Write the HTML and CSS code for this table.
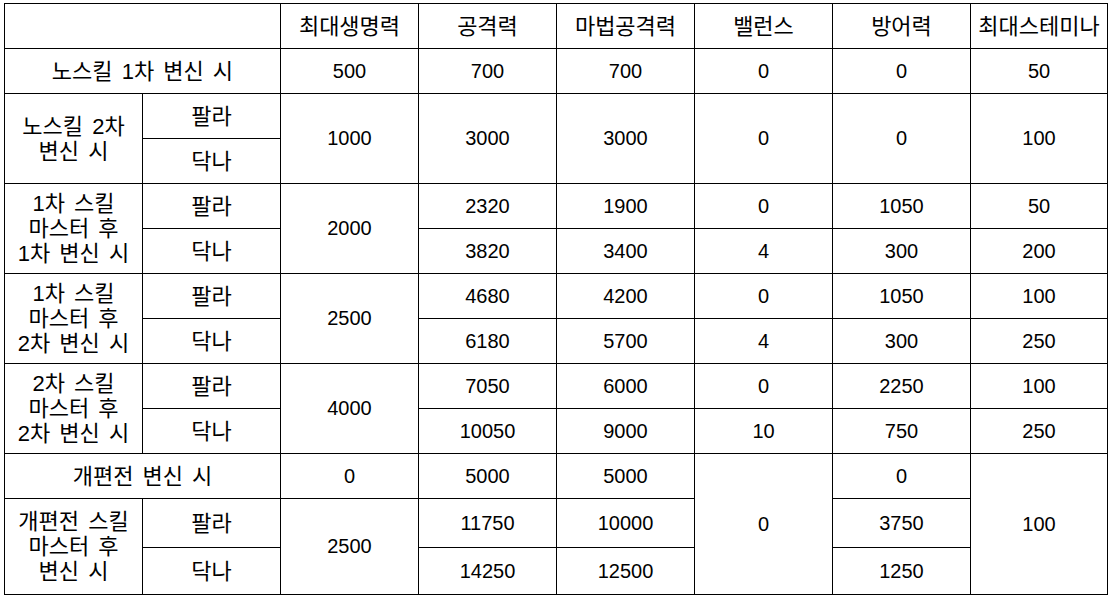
FILE: index.html
```html
<!DOCTYPE html>
<html lang="ko">
<head>
<meta charset="utf-8">
<link rel="stylesheet" href="styles.css">
</head>
<body>
<table class="stats">
  <colgroup>
    <col class="c-a"><col class="c-b"><col class="c"><col class="c"><col class="c"><col class="c"><col class="c"><col class="c-last">
  </colgroup>
  <tr class="r-head">
    <td colspan="2"></td>
    <td class="ko">최대생명력</td><td class="ko">공격력</td><td class="ko">마법공격력</td><td class="ko">밸런스</td><td class="ko">방어력</td><td class="ko">최대스테미나</td>
  </tr>
  <tr class="r">
    <td colspan="2" class="ko">노스킬 1차 변신 시</td>
    <td>500</td><td>700</td><td>700</td><td>0</td><td>0</td><td>50</td>
  </tr>
  <tr class="r">
    <td rowspan="2" class="ko">노스킬 2차<br>변신 시</td>
    <td class="ko">팔라</td>
    <td rowspan="2">1000</td><td rowspan="2">3000</td><td rowspan="2">3000</td><td rowspan="2">0</td><td rowspan="2">0</td><td rowspan="2">100</td>
  </tr>
  <tr class="r"><td class="ko">닥나</td></tr>
  <tr class="r">
    <td rowspan="2" class="ko">1차 스킬<br>마스터 후<br>1차 변신 시</td>
    <td class="ko">팔라</td>
    <td rowspan="2">2000</td><td>2320</td><td>1900</td><td>0</td><td>1050</td><td>50</td>
  </tr>
  <tr class="r"><td class="ko">닥나</td><td>3820</td><td>3400</td><td>4</td><td>300</td><td>200</td></tr>
  <tr class="r">
    <td rowspan="2" class="ko">1차 스킬<br>마스터 후<br>2차 변신 시</td>
    <td class="ko">팔라</td>
    <td rowspan="2">2500</td><td>4680</td><td>4200</td><td>0</td><td>1050</td><td>100</td>
  </tr>
  <tr class="r"><td class="ko">닥나</td><td>6180</td><td>5700</td><td>4</td><td>300</td><td>250</td></tr>
  <tr class="r">
    <td rowspan="2" class="ko">2차 스킬<br>마스터 후<br>2차 변신 시</td>
    <td class="ko">팔라</td>
    <td rowspan="2">4000</td><td>7050</td><td>6000</td><td>0</td><td>2250</td><td>100</td>
  </tr>
  <tr class="r"><td class="ko">닥나</td><td>10050</td><td>9000</td><td>10</td><td>750</td><td>250</td></tr>
  <tr class="r">
    <td colspan="2" class="ko">개편전 변신 시</td>
    <td>0</td><td>5000</td><td>5000</td><td rowspan="3">0</td><td>0</td><td rowspan="3">100</td>
  </tr>
  <tr class="r-b">
    <td rowspan="2" class="ko">개편전 스킬<br>마스터 후<br>변신 시</td>
    <td class="ko">팔라</td>
    <td rowspan="2">2500</td><td>11750</td><td>10000</td><td>3750</td>
  </tr>
  <tr class="r-c"><td class="ko">닥나</td><td>14250</td><td>12500</td><td>1250</td></tr>
</table>
</body>
</html>
```

FILE: styles.css
```css
html, body {
  margin: 0;
  padding: 0;
  background: #ffffff;
}
body {
  padding: 3px 0 0 4px;
}
.stats {
  border-collapse: collapse;
  table-layout: fixed;
  width: 1103px;
  font-family: "Liberation Sans", "Noto Sans CJK KR", sans-serif;
  font-size: 20px;
  color: #000;
}
.c-a, .c-b, .c { width: 138px; }
.c-last { width: 137px; }
.stats td {
  border: 1px solid #000;
  padding: 0;
  text-align: center;
  vertical-align: middle;
  line-height: 25px;
  white-space: nowrap;
}
.stats td.ko {
  font-size: 22px;
  word-spacing: 3px;
}
.r-head { height: 45px; }
.r { height: 45px; }
.r-b { height: 49px; }
.r-c { height: 47px; }
```
